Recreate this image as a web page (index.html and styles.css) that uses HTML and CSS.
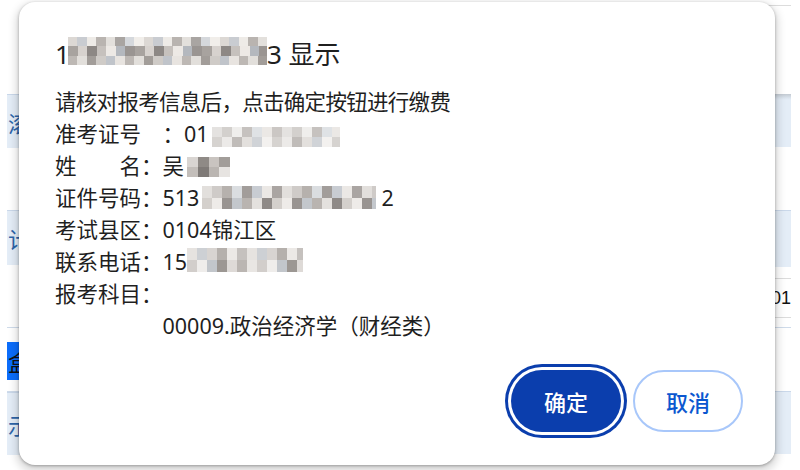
FILE: index.html
```html
<!DOCTYPE html>
<html lang="zh-CN">
<head>
<meta charset="utf-8">
<title>显示</title>
<link rel="stylesheet" href="styles.css">
</head>
<body>
<div class="page">
  <div class="col col-left">
    <div class="blank h94"></div>
    <div class="cell tint h54"><span class="ctext">滚</span></div>
    <div class="blank h62"></div>
    <div class="cell tint h55"><span class="ctext">计</span></div>
    <div class="blank h63 rule"></div>
    <div class="blank h14"></div>
    <div class="cell hot h38"><span class="ctext dark">盒</span></div>
    <div class="blank h12 rule"></div>
    <div class="cell tint h63"><span class="ctext">示</span></div>
  </div>
  <div class="spacer"></div>
  <div class="col col-right">
    <div class="blank h6 grayrule"></div>
    <div class="blank h88"></div>
    <div class="cell tint head h53"></div>
    <div class="blank h63"></div>
    <div class="cell tint h57"></div>
    <div class="blank h12 grayrule"></div>
    <div class="cell num h39 grayrule">2001</div>
    <div class="blank h10 rule"></div>
    <div class="blank h63"></div>
    <div class="cell tint h63"></div>
  </div>
</div>

<div class="dialog" role="alertdialog">
  <div class="title">1<span class="mz mz-t"></span>3 显示</div>
  <div class="msg">
    <div class="line lead">请核对报考信息后，点击确定按钮进行缴费</div>
    <div class="line">准考证号　：01<span class="mz mz-a"></span></div>
    <div class="line">姓　　名：吴<span class="mz mz-b"></span></div>
    <div class="line">证件号码：513<span class="mz mz-c"></span>2</div>
    <div class="line">考试县区：0104锦江区</div>
    <div class="line">联系电话：15<span class="mz mz-d"></span></div>
    <div class="line">报考科目：</div>
    <div class="line indent">00009.政治经济学（财经类）</div>
  </div>
  <div class="actions">
    <button class="btn primary">确定</button>
    <button class="btn secondary">取消</button>
  </div>
</div>
</body>
</html>
```

FILE: styles.css
```css
* { box-sizing: border-box; }

html, body {
  margin: 0;
  padding: 0;
  background: #ffffff;
}

body {
  width: 800px;
  height: 470px;
  overflow: hidden;
  position: relative;
  font-family: "Noto Sans", "Noto Sans CJK SC", sans-serif;
  color: #1f1f1f;
}

/* ---------- page behind the dialog ---------- */
.page {
  display: flex;
  height: 470px;
  padding: 0 9px 0 7px;
}

.spacer { flex: 1; }

.col {
  display: flex;
  flex-direction: column;
}

.col-left { width: 53px; }
.col-right { width: 91px; }

.blank { background: #fff; }
.rule { border-bottom: 1px solid #cfdbea; }
.grayrule { border-bottom: 1px solid #dcdcdc; }

.cell {
  display: flex;
  align-items: center;
  overflow: hidden;
}

.tint {
  background: #e4edf7;
  border-top: 1px solid #cad8ea;
}

.tint.head {
  border-top: none;
  background: linear-gradient(#c3cad2 0, #dbe4ee 4px, #e4edf7 6px);
}

.hot { background: #0b6dfb; }

.ctext {
  font-family: "Noto Sans CJK SC", sans-serif;
  font-size: 22px;
  line-height: 1;
  color: #2d64a8;
  padding-left: 1px;
}

.ctext.dark { color: #111; }

.num {
  justify-content: flex-end;
  font-family: "Liberation Sans", Arial, sans-serif;
  font-size: 18px;
  color: #111;
  padding-right: 0;
}

.h6 { height: 6px; }
.h10 { height: 10px; }
.h12 { height: 12px; }
.h14 { height: 14px; }
.h38 { height: 38px; }
.h39 { height: 39px; }
.h53 { height: 53px; }
.h54 { height: 54px; }
.h55 { height: 55px; }
.h57 { height: 57px; }
.h62 { height: 62px; }
.h63 { height: 63px; }
.h88 { height: 88px; }
.h94 { height: 94px; }

/* ---------- dialog ---------- */
.dialog {
  position: absolute;
  left: 19px;
  top: 2px;
  width: 756px;
  height: 463px;
  background: #ffffff;
  border-radius: 16px;
  box-shadow: 0 1px 3px rgba(0, 0, 0, 0.3), 0 4px 8px 3px rgba(0, 0, 0, 0.15);
  padding: 35px 32px 33px 36px;
  display: flex;
  flex-direction: column;
}

.title {
  height: 34px;
  line-height: 34px;
  font-size: 26px;
  color: #1f1f1f;
  white-space: nowrap;
}

.msg {
  margin-top: 15px;
  font-size: 21.5px;
}

.line {
  height: 32px;
  line-height: 32px;
  white-space: nowrap;
}

.line.lead { letter-spacing: -0.7px; }
.line.indent { padding-left: 5em; }

/* pixelated redaction blocks */
.mz {
  display: inline-block;
  vertical-align: -3px;
  background-repeat: repeat-x;
}

.mz-t {
  width: 199px;
  height: 28px;
  margin-left: -2px;
  vertical-align: -1px;
  background-image:
    linear-gradient(to right, #dcd8d4 0 9px, #c9ccd1 9px 19px, #eeebe7 19px 28px, #b9b4b0 28px 38px, #e3e0dc 38px 47px, #a9a5a2 47px 57px, #d5d8dc 57px 66px, #f1eeea 66px 76px),
    linear-gradient(to right, #a8a39f 0 10px, #d7d2ce 10px 19px, #8d8885 19px 29px, #c6c1bd 29px 38px, #ede9e5 38px 48px, #b4b8be 48px 57px, #9a9592 57px 67px),
    linear-gradient(to right, #bdb8b4 0 9px, #e2dfdb 9px 19px, #a29d99 19px 28px, #cfcbc7 28px 38px, #c0c4ca 38px 47px, #e8e4e0 47px 57px);
  background-size: 76px 9px, 67px 10px, 57px 9px;
  background-position: 0 0, 0 9px, 0 19px;
}

.mz-a {
  width: 128px;
  height: 20px;
  margin-left: 3px;
  vertical-align: -5px;
  background-image:
    linear-gradient(to right, #e4e2e0 0 10px, #d3d0cd 10px 20px, #efeeec 20px 30px, #c6c2bf 30px 40px, #dfe2e5 40px 50px, #ebe8e5 50px 60px, #cbc7c4 60px 70px),
    linear-gradient(to right, #d6d3d0 0 10px, #eceae8 10px 20px, #c0bcb9 20px 30px, #e3e0dd 30px 40px, #d0d3d7 40px 50px, #f3f1ef 50px 60px);
  background-size: 70px 10px, 60px 10px;
  background-position: 0 0, 0 10px;
}

.mz-b {
  width: 43px;
  height: 20px;
  margin-left: 3px;
  vertical-align: -3px;
  background-image:
    linear-gradient(to right, #d9d5d2 0 11px, #8f8a86 11px 22px, #c9c4c0 22px 32px, #a29d99 32px 43px),
    linear-gradient(to right, #c3beba 0 11px, #7f7a77 11px 22px, #bab5b1 22px 32px, #e7e4e1 32px 43px);
  background-size: 43px 10px, 43px 10px;
  background-position: 0 0, 0 10px;
}

.mz-c {
  width: 174px;
  height: 23px;
  margin: 0 5px 0 3px;
  vertical-align: -3px;
  background-image:
    linear-gradient(to right, #e2dfdc 0 10px, #cfcbc8 10px 20px, #b6b1ad 20px 30px, #dadde0 30px 40px, #a29d9a 40px 50px, #c8ccd2 50px 60px, #ebe8e5 60px 70px, #aaa5a2 70px 80px),
    linear-gradient(to right, #d4d0cc 0 10px, #eeebe8 10px 20px, #999491 20px 30px, #c3c7cc 30px 40px, #b9b4b0 40px 50px, #e4e1de 50px 60px, #8f8a87 60px 70px);
  background-size: 80px 12px, 70px 11px;
  background-position: 0 0, 0 12px;
}

.mz-d {
  width: 116px;
  height: 24px;
  vertical-align: -2px;
  background-image:
    linear-gradient(to right, #e6e3e0 0 10px, #cdd0d4 10px 20px, #d8d4d1 20px 30px, #b5b0ac 30px 40px, #ece9e6 40px 50px, #c5c1be 50px 60px),
    linear-gradient(to right, #d2cecb 0 10px, #efedeb 10px 20px, #c2c6cb 20px 30px, #9c9793 30px 40px, #dedad7 40px 50px, #bbb6b2 50px 60px, #e9e6e3 60px 70px);
  background-size: 60px 12px, 70px 12px;
  background-position: 0 0, 0 12px;
}

/* ---------- buttons ---------- */
.actions {
  margin-top: auto;
  display: flex;
  justify-content: flex-end;
  gap: 12px;
}

.btn {
  width: 110px;
  height: 62px;
  border-radius: 31px;
  font-family: "Noto Sans CJK SC", sans-serif;
  font-size: 22px;
  font-weight: 500;
  padding: 0;
  cursor: pointer;
}

.primary {
  background: #0b3ead;
  color: #ffffff;
  border: none;
  box-shadow: 0 0 0 3px #ffffff, 0 0 0 6px #0b3ead;
}

.secondary {
  background: #ffffff;
  color: #0b57d0;
  border: 2px solid #a8c7fa;
}
```
